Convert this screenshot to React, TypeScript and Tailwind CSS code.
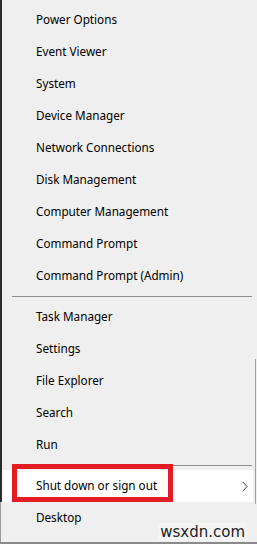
const groupA = [
  'Power Options',
  'Event Viewer',
  'System',
  'Device Manager',
  'Network Connections',
  'Disk Management',
  'Computer Management',
  'Command Prompt',
  'Command Prompt (Admin)',
];

const groupB = ['Task Manager', 'Settings', 'File Explorer', 'Search', 'Run'];

const Row = ({ label }: { label: string }) => (
  <div className="h-8 flex items-center pl-[34px] text-[11.7px] text-black">{label}</div>
);

const Separator = () => (
  <div className="py-1 pl-[10px] pr-[5px]">
    <div className="h-px bg-[#8c8c8c]" />
  </div>
);

const App = () => {
  return (
    <div
      className="relative w-[257px] h-[544px] overflow-hidden bg-[#efefef]"
      style={{ fontFamily: '"Segoe UI", "Noto Sans", sans-serif' }}
    >
      <div className="h-full flex flex-row">
        <div className="w-[2px] flex flex-col">
          <div className="h-[502px] bg-[#2b2b2b]" />
          <div className="flex-1 border-l border-[#9a9a9a]" />
        </div>
        <div className="flex-1 flex flex-col pt-1">
          {groupA.map((l) => (
            <Row key={l} label={l} />
          ))}
          <Separator />
          {groupB.map((l) => (
            <Row key={l} label={l} />
          ))}
          <Separator />
          <div className="h-8 flex items-center pl-[34px] pr-[5px] mr-[4px] bg-white text-[11.7px] text-black">
            <span>Shut down or sign out</span>
            <svg viewBox="0 0 7 12" className="ml-auto w-[6px] h-[11px]" fill="none" stroke="#333" strokeWidth="1.1">
              <path d="M0.8 0.5 L6 6 L0.8 11.5" />
            </svg>
          </div>
          <Row label="Desktop" />
        </div>
      </div>

      {/* window edge behind the menu */}
      <div className="absolute left-[255px] top-[359px] h-[145px] w-px bg-[#a0a0a0]" />

      {/* red highlight */}
      <div className="absolute left-[12px] top-[464px] w-[161px] h-[38px] border-[5px] border-[#e31b23]" />

      {/* watermark */}
      <div
        className="absolute right-[10px] bottom-[3px] px-[2px] bg-[#f4f4f4] text-[15px] leading-[18px] text-[#222]"
        style={{ fontFamily: '"DejaVu Sans", sans-serif' }}
      >
        wsxdn.com
      </div>
      <div className="absolute left-0 right-0 bottom-0 h-[2px] bg-[#8a8a8a]" />
    </div>
  );
};

export default App;
